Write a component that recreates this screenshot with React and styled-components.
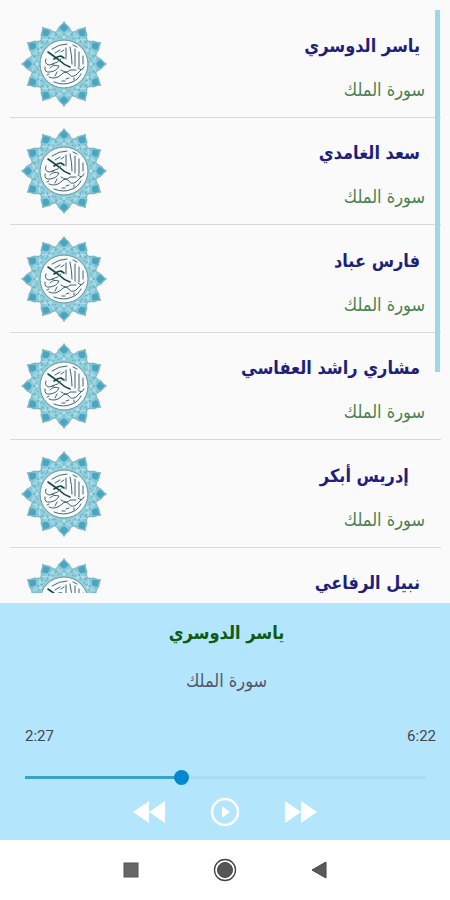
import React, { useState } from 'react';
import styled, { createGlobalStyle } from 'styled-components';

const GlobalStyle = createGlobalStyle`
  * {
    box-sizing: border-box;
  }
  body {
    margin: 0;
    background: #fff;
    font-family: Roboto, 'DejaVu Sans', sans-serif;
  }
`;

const Screen = styled.div`
  display: flex;
  flex-direction: column;
  height: 100vh;
`;

const ListPane = styled.main`
  position: relative;
  flex: 1;
  min-height: 0;
  padding: 10px 9px 10px 10px;
  background: #fafafa;
`;

const ReciterList = styled.ul`
  height: 100%;
  margin: 0;
  padding: 0;
  overflow: hidden;
  list-style: none;
`;

const ReciterItem = styled.li`
  height: 108px;
  border-bottom: 1px solid #d9d9d9;
  &:nth-child(even) {
    height: 107px;
  }
`;

const ReciterButton = styled.button`
  display: flex;
  justify-content: space-between;
  align-items: center;
  width: 100%;
  height: 100%;
  padding: 0 16px 0 10px;
  border: 0;
  background: none;
  font-family: inherit;
  cursor: pointer;
`;

const ReciterText = styled.span`
  display: flex;
  flex-direction: column;
  gap: 14px;
  padding-top: 8px;
  text-align: start;
`;

const Name = styled.span`
  padding-right: 5px;
  color: #1f1f7c;
  font-family: 'DejaVu Sans Condensed', 'DejaVu Sans', sans-serif;
  font-size: 18px;
  font-weight: bold;
  line-height: 30px;
  white-space: pre;
`;

const Surah = styled.span`
  color: #4a8250;
  font-family: 'DejaVu Sans Condensed', 'DejaVu Sans', sans-serif;
  font-size: 18px;
  line-height: 30px;
`;

const ScrollThumb = styled.div`
  position: absolute;
  top: 10px;
  right: 10px;
  width: 5px;
  height: 60%;
  background: #9bd8ec;
`;

const Player = styled.section`
  display: flex;
  flex-direction: column;
  height: 237px;
  padding: 15px 14px 12px 25px;
  background: #b3e5fc;
`;

const PlayerHeading = styled.div`
  display: flex;
  flex-direction: column;
  align-items: center;
  gap: 18px;
  padding-right: 8px;
`;

const NowPlaying = styled.h1`
  margin: 0;
  color: #0f5a14;
  font-family: 'DejaVu Sans Condensed', 'DejaVu Sans', sans-serif;
  font-size: 18px;
  line-height: 30px;
`;

const NowSurah = styled(Surah)`
  color: #56566b;
`;

const Times = styled.div`
  display: flex;
  justify-content: space-between;
  margin-top: 30px;
  color: #3f4652;
  font-size: 15px;
  line-height: 20px;
`;

const Seek = styled.input`
  width: calc(100% - 10px);
  height: 16px;
  margin: 23px 0 0;
  appearance: none;
  background: linear-gradient(
    to right,
    #38a3c4 ${p => p.$played}%,
    #a3e0f4 ${p => p.$played}%
  ) center / 100% 3px no-repeat;
  &::-webkit-slider-thumb {
    width: 15px;
    height: 15px;
    appearance: none;
    border-radius: 50%;
    background: #0288d1;
  }
`;

const Controls = styled.div`
  display: flex;
  justify-content: center;
  align-items: center;
  gap: 44px;
  margin-top: 12px;
  padding-right: 11px;
`;

const IconButton = styled.button`
  display: flex;
  padding: 0;
  border: 0;
  background: none;
  color: #fff;
  cursor: pointer;
`;

const NavBar = styled.nav`
  display: flex;
  justify-content: center;
  align-items: center;
  gap: 74px;
  height: 60px;
  background: #fff;
`;

const reciters = [
  'ياسر الدوسري',
  'سعد الغامدي',
  'فارس عباد',
  'مشاري راشد العفاسي',
  '\u00a0\u00a0إدريس أبكر',
  'نبيل الرفاعي'
];

const surah = 'سورة الملك';
const petals = Array.from({ length: 12 }, (_, i) => i * 30);

function formatTime(seconds) {
  return `${Math.floor(seconds / 60)}:${String(seconds % 60).padStart(2, '0')}`;
}

function Emblem() {
  return (
    <svg width="88" height="88" viewBox="-44 -44 88 88" aria-hidden="true">
      {petals.map(angle => (
        <path
          key={angle}
          transform={`rotate(${angle})`}
          d="M0 -42.5 C-1 -40 -4 -38.500 -5.500 -36.500 C-6 -34.500 -7 -33 -8.600 -32 L0 -20 L8.600 -32 C7 -33 6 -34.500 5.500 -36.500 C4 -38.500 1 -40 0 -42.500Z"
          fill="#84c8d9"
          stroke="#6ba3ae"
          strokeWidth="0.7"
        />
      ))}
      <circle r="32.500" fill="#92cfdd" />
      {petals.map(angle => (
        <g key={angle} transform={`rotate(${angle})`} fill="none" strokeWidth="0.8">
          <path d="M0 -41 C-1 -39 -4.500 -37.500 -4 -35 L0 -32 L4 -35 C4.500 -37.500 1 -39 0 -41Z" fill="#4ba5c0" />
          <path d="M-7 -32 Q-3 -31 0 -27 Q3 -31 7 -32" stroke="#b9e1ea" />
          <path d="M-4 -26.500 L-2 -29 M4 -26.500 L2 -29" stroke="#6fb1c0" />
          <circle cy="-30" r="1" fill="#65b0c3" />
          <circle cy="-26.500" r="0.900" fill="#cdebf0" />
          <circle cx="7.800" cy="-29.500" r="1.200" fill="#69b2c3" />
          <circle cx="4.500" cy="-29.500" r="0.700" fill="#c5e7ed" />
          <circle cx="-5.500" cy="-26.500" r="0.800" fill="#68aebe" />
        </g>
      ))}
      <circle r="24" fill="#f7fafa" stroke="#6b9299" strokeWidth="1" />
      <g fill="none" stroke="#48656c" strokeLinecap="round" strokeLinejoin="round">
        <path d="M-16 -12 Q-9 -7 -5 -4 Q0 1 6 3" stroke="#16464b" strokeWidth="1.600" />
        <path d="M-10 -5 Q-6 -8 -3 -8 L0 -6" stroke="#16464b" strokeWidth="1.600" />
        <path d="M-12 0 Q-6 -1 -3 -5 M-18 -5 Q-20 0 -15 1 L-10 0" />
        <path d="M-19 3 Q-20 9 -14 8 Q-7 7 -5 2 Q-11 0 -14 4" />
        <path d="M-15 13 Q-9 16 -3 11 Q1 6 5 10 Q7 14 12 11 L18 5" />
        <path d="M-10 18 Q0 22 8 18 Q14 16 17 10" />
        <path d="M-3 6 Q3 10 6 6 H12 M14 4 Q18 8 20 3" />
        <path d="M2 -16 V-5 M6 -17 Q8 -8 8 0 M11 -15 V2 M15 -12 V3 M19 -8 V0" />
        <path d="M-12 -15 Q-5 -20 3 -20 M-9 -11 L-4 -14 M-3 -12 L0 -14 M9 -19 L13 -17" />
        <path d="M-17 11 L-15 10 M-7 8 L-9 12 M2 15 L5 14 M10 14 V16 M-2 17 H1" />
      </g>
    </svg>
  );
}

function SkipIcon({ back }) {
  return (
    <svg width="34" height="24" viewBox="0 0 34 24" aria-hidden="true">
      <path
        d="M1 1 L17 12 L1 23Z M17 1 L33 12 L17 23Z"
        fill="currentColor"
        transform={back ? 'rotate(180 17 12)' : undefined}
      />
    </svg>
  );
}

export default function App() {
  const [current, setCurrent] = useState(0);
  const [position, setPosition] = useState(147);
  const duration = 382;

  const skip = step => setCurrent((current + step + reciters.length) % reciters.length);

  return (
    <Screen>
      <GlobalStyle />
      <ListPane>
        <ReciterList>
          {reciters.map((name, i) => (
            <ReciterItem key={name}>
              <ReciterButton onClick={() => setCurrent(i)}>
                <Emblem />
                <ReciterText dir="rtl" lang="ar">
                  <Name>{name}</Name>
                  <Surah>{surah}</Surah>
                </ReciterText>
              </ReciterButton>
            </ReciterItem>
          ))}
        </ReciterList>
        <ScrollThumb />
      </ListPane>
      <Player>
        <PlayerHeading lang="ar">
          <NowPlaying dir="rtl">{reciters[current].trim()}</NowPlaying>
          <NowSurah dir="rtl">{surah}</NowSurah>
        </PlayerHeading>
        <Times>
          <span>{formatTime(position)}</span>
          <span>{formatTime(duration)}</span>
        </Times>
        <Seek
          type="range"
          aria-label="Seek"
          min="0"
          max={duration}
          value={position}
          $played={(position / duration) * 100}
          onChange={e => setPosition(Number(e.target.value))}
        />
        <Controls>
          <IconButton aria-label="Previous" onClick={() => skip(-1)}>
            <SkipIcon back />
          </IconButton>
          <IconButton aria-label="Play">
            <svg width="30" height="30" viewBox="0 0 30 30" aria-hidden="true">
              <circle cx="15" cy="15" r="13" fill="none" stroke="currentColor" strokeWidth="2.500" />
              <path d="M12 9 L20 15 L12 21Z" fill="currentColor" />
            </svg>
          </IconButton>
          <IconButton aria-label="Next" onClick={() => skip(1)}>
            <SkipIcon />
          </IconButton>
        </Controls>
      </Player>
      <NavBar>
        <IconButton aria-label="Recents">
          <svg width="16" height="16" viewBox="0 0 16 16" aria-hidden="true">
            <rect x="1" y="1" width="14" height="14" fill="#666" stroke="#555" />
          </svg>
        </IconButton>
        <IconButton aria-label="Home">
          <svg width="24" height="24" viewBox="0 0 24 24" aria-hidden="true">
            <circle cx="12" cy="12" r="10.500" fill="none" stroke="#444" strokeWidth="1.300" />
            <circle cx="12" cy="12" r="7.500" fill="#555" stroke="#444" />
          </svg>
        </IconButton>
        <IconButton aria-label="Back">
          <svg width="16" height="18" viewBox="0 0 16 18" aria-hidden="true">
            <path d="M15 1 V17 L1 9Z" fill="#5a5a5a" stroke="#444" />
          </svg>
        </IconButton>
      </NavBar>
    </Screen>
  );
}
